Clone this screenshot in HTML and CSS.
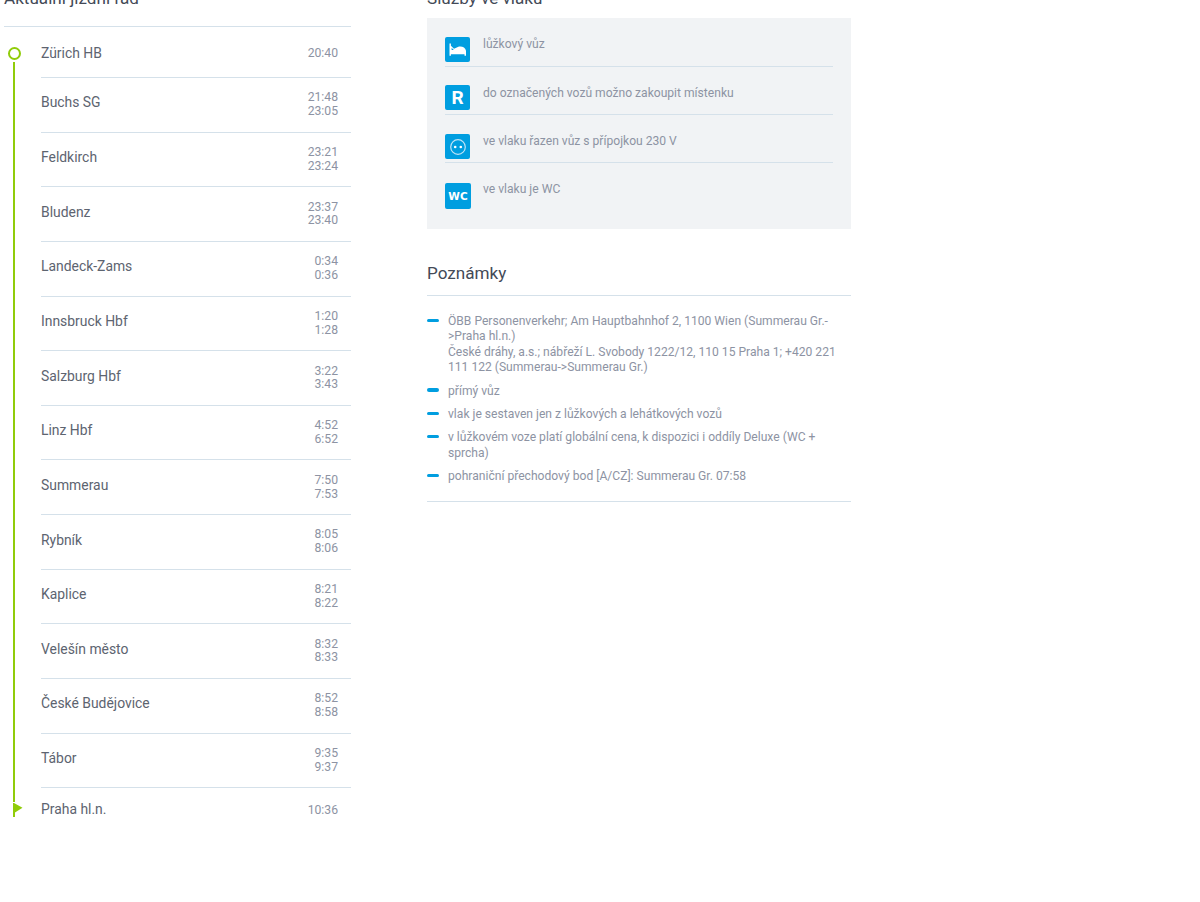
FILE: index.html
```html
<!DOCTYPE html>
<html lang="cs">
<head>
<meta charset="utf-8">
<title>Jízdní řád</title>
<link rel="stylesheet" href="styles.css">
</head>
<body>
<main class="page">
  <section class="col-left">
    <h2 class="head head-route">Aktuální jízdní řád</h2>
    <ol class="route">
      <li class="stop stop-first"><span class="name">Zürich HB</span><span class="time"><span>20:40</span></span></li>
      <li class="stop"><span class="name">Buchs SG</span><span class="time"><span>21:48</span><span>23:05</span></span></li>
      <li class="stop"><span class="name">Feldkirch</span><span class="time"><span>23:21</span><span>23:24</span></span></li>
      <li class="stop"><span class="name">Bludenz</span><span class="time"><span>23:37</span><span>23:40</span></span></li>
      <li class="stop"><span class="name">Landeck-Zams</span><span class="time"><span>0:34</span><span>0:36</span></span></li>
      <li class="stop"><span class="name">Innsbruck Hbf</span><span class="time"><span>1:20</span><span>1:28</span></span></li>
      <li class="stop"><span class="name">Salzburg Hbf</span><span class="time"><span>3:22</span><span>3:43</span></span></li>
      <li class="stop"><span class="name">Linz Hbf</span><span class="time"><span>4:52</span><span>6:52</span></span></li>
      <li class="stop"><span class="name">Summerau</span><span class="time"><span>7:50</span><span>7:53</span></span></li>
      <li class="stop"><span class="name">Rybník</span><span class="time"><span>8:05</span><span>8:06</span></span></li>
      <li class="stop"><span class="name">Kaplice</span><span class="time"><span>8:21</span><span>8:22</span></span></li>
      <li class="stop"><span class="name">Velešín město</span><span class="time"><span>8:32</span><span>8:33</span></span></li>
      <li class="stop"><span class="name">České Budějovice</span><span class="time"><span>8:52</span><span>8:58</span></span></li>
      <li class="stop"><span class="name">Tábor</span><span class="time"><span>9:35</span><span>9:37</span></span></li>
      <li class="stop stop-last"><span class="name">Praha hl.n.</span><span class="time"><span>10:36</span></span></li>
    </ol>
    <span class="ring"></span>
    <span class="rail"></span>
    <svg class="flag" width="10" height="14" viewBox="0 0 10 14"><path d="M0 0h1L9.500 4.800 2 9.400V14H0z" fill="#90cc0a"/></svg>
  </section>
  <section class="col-right">
    <h2 class="head head-services">Služby ve vlaku</h2>
    <ul class="services">
      <li class="service service-first">
        <span class="badge"><svg width="20" height="14" viewBox="0 0 20 14"><path d="M1.500 .5h1.400v2.300L6 5.700l5-2.200c3.200-.5 6.500 1 7 4.200v5h-1.500v-1.500H2.900v1.500H1.500z" fill="#fff"/><path d="M3.600 4.800l2.200 2.200H3.600z" fill="#009ee0"/></svg></span>
        <span class="service-text">lůžkový vůz</span>
      </li>
      <li class="service">
        <span class="badge badge-letter">R</span>
        <span class="service-text">do označených vozů možno zakoupit místenku</span>
      </li>
      <li class="service service-low">
        <span class="badge"><svg width="18" height="18" viewBox="0 0 18 18"><circle cx="9" cy="9" r="7.300" fill="none" stroke="#bfe3f5" stroke-width="1.200"/><circle cx="6.200" cy="9" r="1.300" fill="#fff"/><circle cx="11.800" cy="9" r="1.300" fill="#fff"/></svg></span>
        <span class="service-text">ve vlaku řazen vůz s přípojkou 230 V</span>
      </li>
      <li class="service service-lower">
        <span class="badge badge-wc">WC</span>
        <span class="service-text">ve vlaku je WC</span>
      </li>
    </ul>
    <h2 class="head head-notes">Poznámky</h2>
    <ul class="notes">
      <li class="note">ÖBB Personenverkehr; Am Hauptbahnhof 2, 1100 Wien (Summerau Gr.-&gt;Praha hl.n.)<br>České dráhy, a.s.; nábřeží L. Svobody 1222/12, 110 15 Praha 1; +420 221 111 122 (Summerau-&gt;Summerau Gr.)</li>
      <li class="note">přímý vůz</li>
      <li class="note">vlak je sestaven jen z lůžkových a lehátkových vozů</li>
      <li class="note">v lůžkovém voze platí globální cena, k dispozici i oddíly Deluxe (WC + sprcha)</li>
      <li class="note">pohraniční přechodový bod [A/CZ]: Summerau Gr. 07:58</li>
    </ul>
  </section>
</main>
</body>
</html>
```
FILE: styles.css
```css
* { box-sizing: border-box; }
html, body { margin: 0; padding: 0; background: #fff; }
body { height: 902px; overflow: hidden; font-family: Roboto, "Liberation Sans", sans-serif; }
.page { display: flex; gap: 76px; margin-top: -12px; padding-left: 4px; align-items: flex-start; }
.col-left { position: relative; width: 347px; flex: none; }
.col-right { width: 424px; flex: none; }
.head { margin: 0; font-size: 17.100px; font-weight: 400; color: #434a57; line-height: 21px; }
.head-route { border-bottom: 1px solid #d5e1ea; height: 39px; }
.head-services { height: 30px; }
.route, .services, .notes { list-style: none; margin: 0; padding: 0; }
.route { padding-left: 37px; }
.stop { display: flex; justify-content: space-between; align-items: center; height: 54.650px; padding-right: 13px; border-bottom: 1px solid #d5e1ea; }
.stop-first { height: 51px; }
.stop-first .name { margin-top: 1px; }
.stop-first .time { margin-top: 4px; }
.stop-last { border-bottom: 0; height: 44px; align-items: flex-start; padding-top: 15px; }
.stop-last .name { margin-top: -3px; }
.stop-last .time { margin-top: 1px; }
.name { font-size: 13.900px; color: #5d6470; line-height: 18px; margin-top: -4.800px; }
.time { display: flex; flex-direction: column; align-items: flex-end; font-size: 12.200px; line-height: 13.700px; color: #8d93a3; margin-top: .5px; }
.ring { position: absolute; left: 4px; top: 59px; width: 13px; height: 13px; border: 2px solid #90cc0a; border-radius: 50%; }
.rail { position: absolute; left: 9px; top: 74px; width: 2px; height: 740px; background: #90cc0a; }
.flag { position: absolute; left: 9px; top: 815px; }
.services { background: #f1f3f5; padding: 1px 18px 0; height: 211px; }
.service { display: flex; gap: 13px; height: 48px; padding-top: 18px; border-bottom: 1px solid #d5e1ea; }
.service:last-child { border-bottom: 0; }
.service-first .service-text { margin-top: -1px; }
.service-low .badge { margin-top: 1px; }
.service-lower .badge { margin-top: 2px; width: 26px; height: 26px; }
.service-lower .service-text { margin-left: -1px; }
.badge { flex: none; width: 25px; height: 25px; border-radius: 2px; background: #009ee0; color: #fff; display: flex; align-items: center; justify-content: center; }
.badge-letter { font-size: 19px; font-weight: 700; }
.badge-wc { font-family: "DejaVu Sans", sans-serif; font-size: 10.500px; font-weight: 700; }
.service-text { font-size: 12.100px; line-height: 16px; color: #8d93a3; }
.head-notes { margin-top: 32px; height: 35px; line-height: 24px; border-bottom: 1px solid #d5e1ea; }
.notes { padding: 18px 0 16px; border-bottom: 1px solid #d5e1ea; }
.note { position: relative; padding-left: 21px; font-size: 12.100px; line-height: 15.400px; color: #8d93a3; margin-bottom: 8px; }
.note:last-child { margin-bottom: 0; }
.note::before { content: ""; position: absolute; left: 0; top: 4.500px; width: 12px; height: 3.500px; border-radius: 2px; background: #009ee0; }
```
